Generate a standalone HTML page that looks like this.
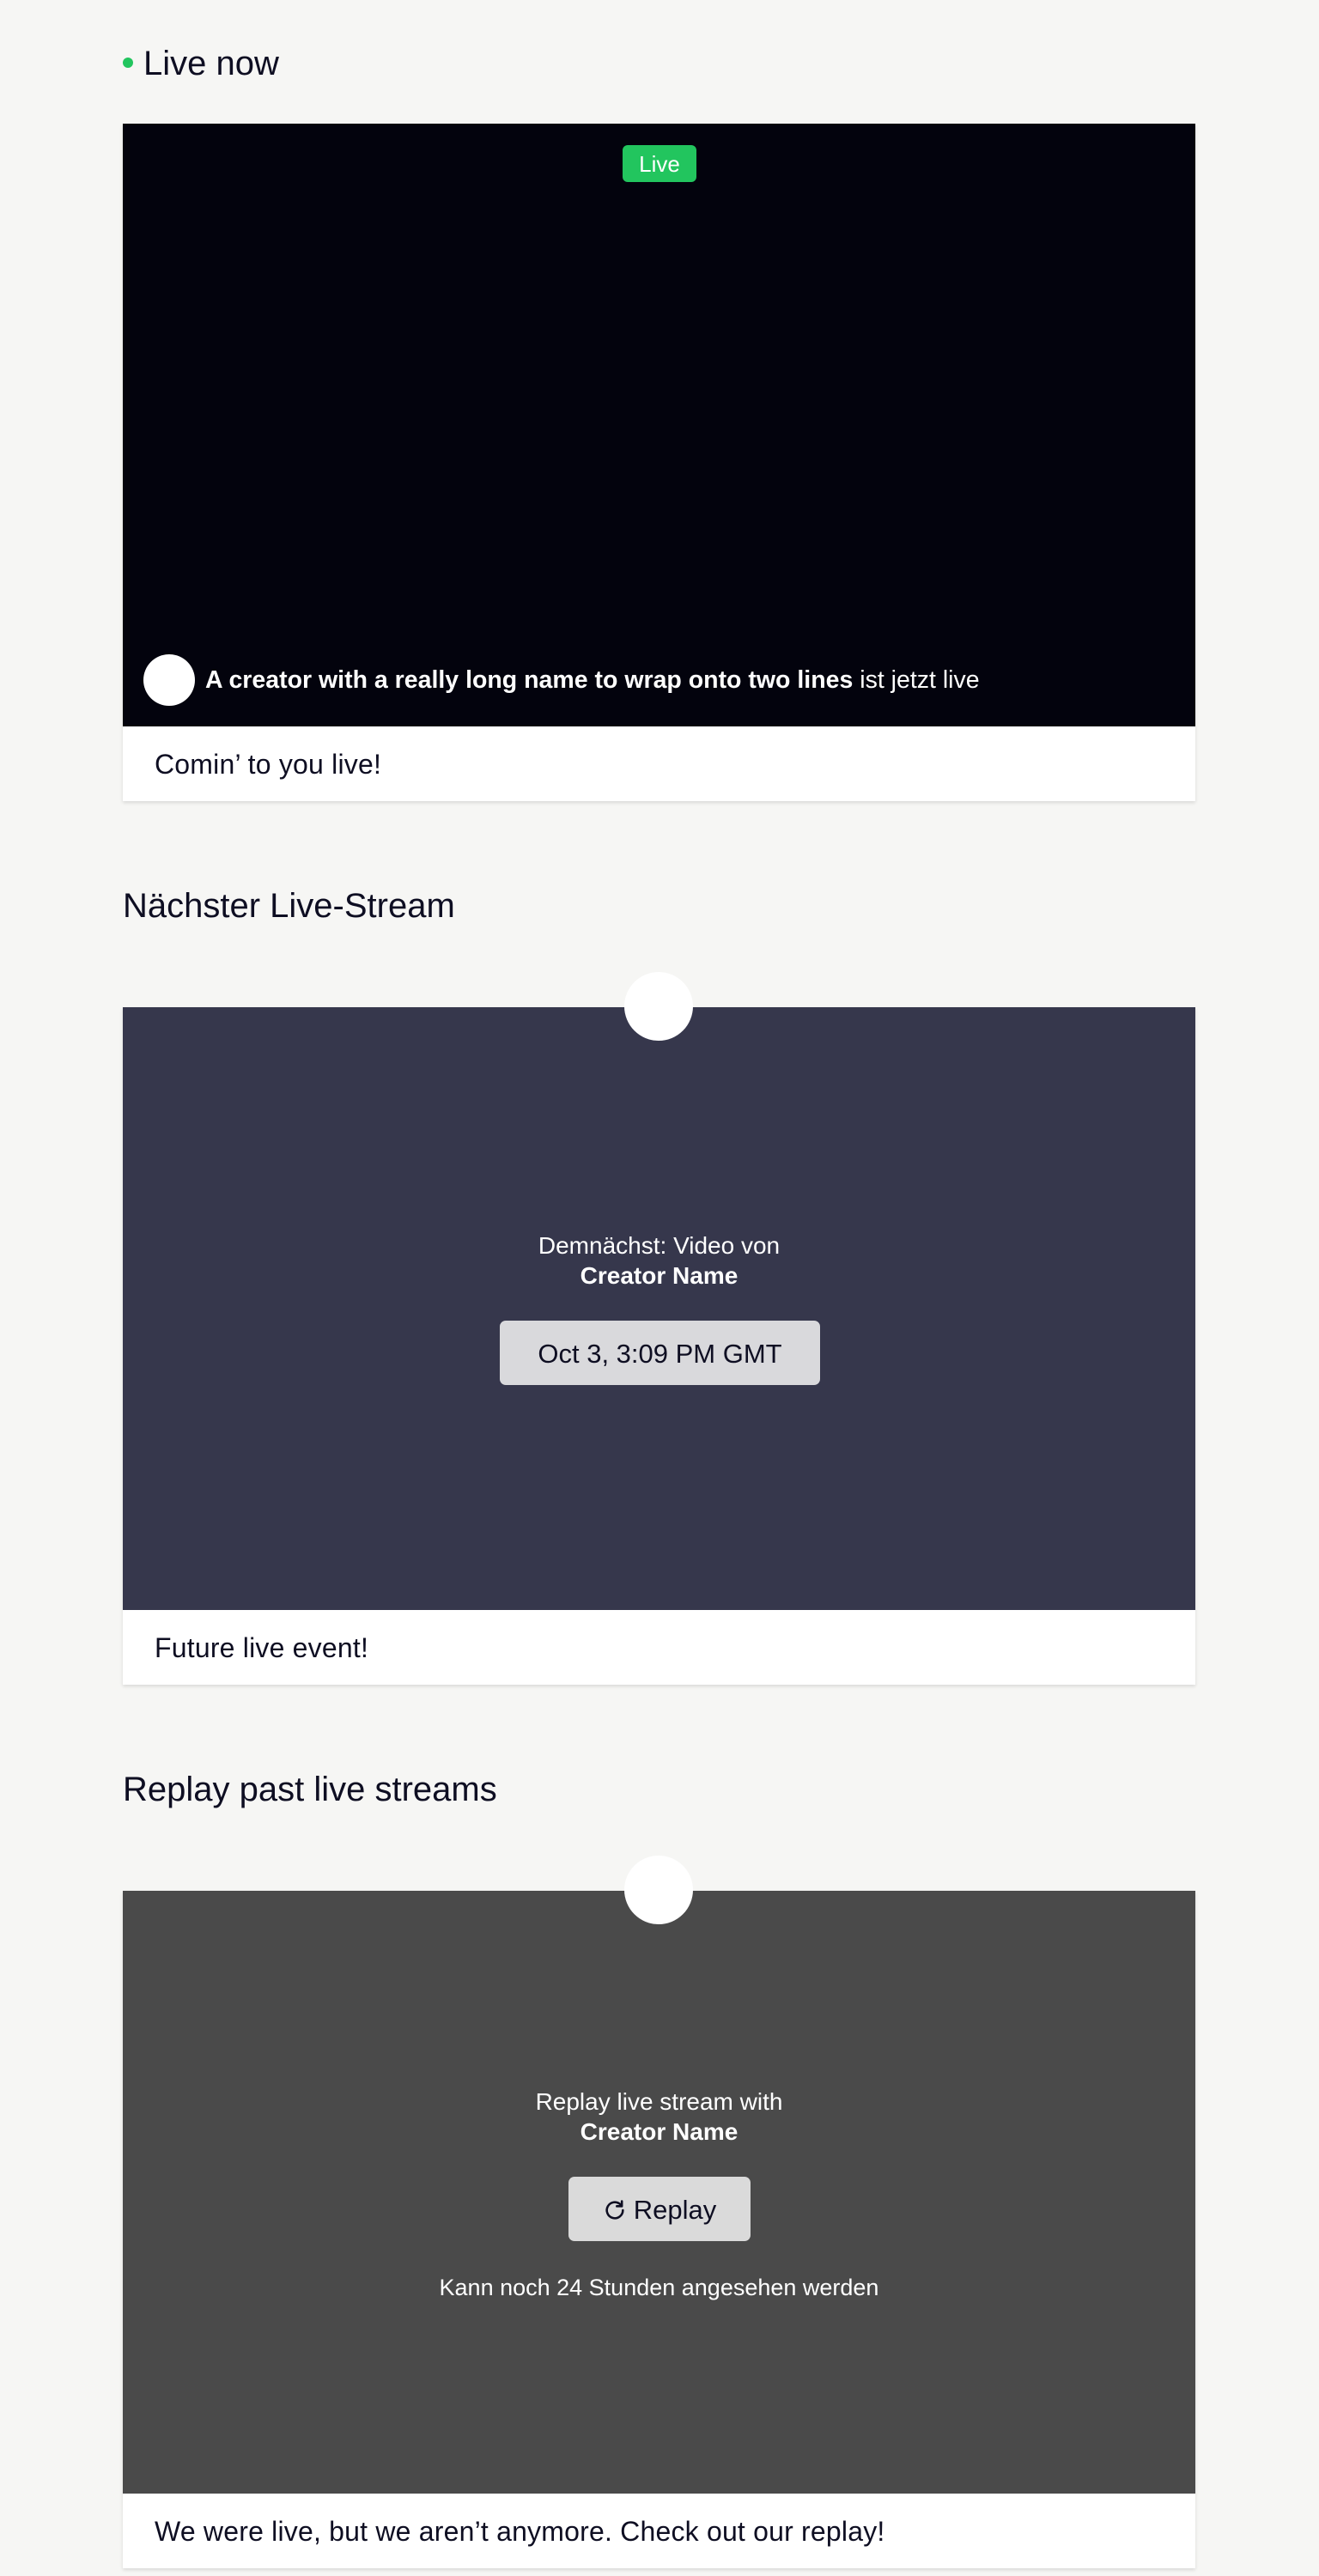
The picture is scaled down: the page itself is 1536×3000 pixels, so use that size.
<!DOCTYPE html>
<html><head><meta charset="utf-8"><style>
*{margin:0;padding:0;box-sizing:border-box}
body{width:1536px;height:3000px;background:#f6f6f4;font-family:"Liberation Sans",sans-serif;color:#0e0e22;position:relative;overflow:hidden}
.h{position:absolute;left:143px;font-size:40px;line-height:1;letter-spacing:0px}
.card{position:absolute;left:143px;width:1249px;box-shadow:0 2px 4px rgba(0,0,0,.12)}
.vid{position:relative;height:702px}
.cap{height:87px;background:#fff;font-size:32px;letter-spacing:0.2px;padding-left:37px;line-height:89px}
.circ{position:absolute;width:80px;height:80px;border-radius:50%;background:#fff;left:584px;top:-41px}
.ctr{position:absolute;left:0;right:0;text-align:center;color:#fff;font-size:28px}
</style></head><body>
<div style="position:absolute;left:143px;top:67px;width:12px;height:12px;border-radius:50%;background:#22c55e"></div>
<div class="h" style="left:167px;top:54px">Live now</div>
<div class="card" style="top:144px">
 <div class="vid" style="background:#03030d">
  <div style="position:absolute;left:582px;top:25px;width:86px;height:43px;border-radius:6px;background:#22c55e;color:#fff;font-size:26px;line-height:44px;text-align:center">Live</div>
  <div style="position:absolute;left:24px;top:618px;width:60px;height:60px;border-radius:50%;background:#fff"></div>
  <div style="position:absolute;left:96px;top:632px;color:#fff;font-size:28.5px;letter-spacing:0px;white-space:nowrap"><b>A creator with a really long name to wrap onto two lines</b> ist jetzt live</div>
 </div>
 <div class="cap">Comin’ to you live!</div>
</div>
<div class="h" style="top:1035px">Nächster Live-Stream</div>
<div class="card" style="top:1173px">
 <div class="vid" style="background:#36374c">
  <div class="circ"></div>
  <div class="ctr" style="top:262px">Demnächst: Video von</div>
  <div class="ctr" style="top:297px;font-weight:bold">Creator Name</div>
  <div style="position:absolute;left:439px;top:365px;width:373px;height:75px;border-radius:7px;background:#d9d9dc;color:#0e0e22;font-size:31px;line-height:77px;text-align:center">Oct 3, 3:09 PM GMT</div>
 </div>
 <div class="cap">Future live event!</div>
</div>
<div class="h" style="top:2064px">Replay past live streams</div>
<div class="card" style="top:2202px">
 <div class="vid" style="background:#4a4a4a">
  <div class="circ"></div>
  <div class="ctr" style="top:230px">Replay live stream with</div>
  <div class="ctr" style="top:265px;font-weight:bold">Creator Name</div>
  <div style="position:absolute;left:519px;top:333px;width:212px;height:75px;border-radius:7px;background:#dadada;color:#0e0e22;font-size:31px;line-height:77px;text-align:center">
   <svg width="28" height="28" viewBox="0 0 24 24" style="vertical-align:-4px;margin-right:8px" fill="none" stroke="#0e0e22" stroke-width="2.2" stroke-linecap="round"><path d="M20 12a8 8 0 1 1-2.4-5.7"/><path d="M19 3v5h-5" stroke-linejoin="round"/></svg>Replay</div>
  <div class="ctr" style="top:447px;font-size:27px">Kann noch 24 Stunden angesehen werden</div>
 </div>
 <div class="cap">We were live, but we aren’t anymore. Check out our replay!</div>
</div>
</body></html>
